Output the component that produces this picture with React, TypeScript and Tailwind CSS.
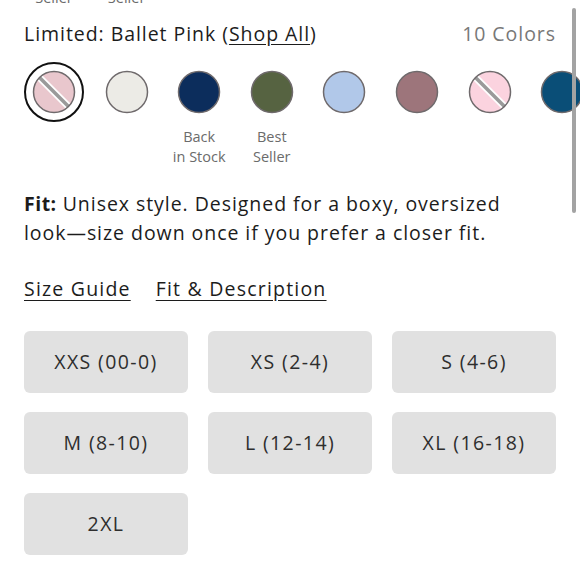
type Swatch = { color: string; stripe?: boolean; selected?: boolean; label?: string[] };

const swatches: Swatch[] = [
    { color: '#e9c7cd', stripe: true, selected: true },
    { color: '#ecebe6' },
    { color: '#0c2d5c', label: ['Back', 'in Stock'] },
    { color: '#566341', label: ['Best', 'Seller'] },
    { color: '#b1c8e9' },
    { color: '#9d757b' },
    { color: '#fbd3df', stripe: true },
    { color: '#0a4e77' },
];

const sizes = ['XXS (00-0)', 'XS (2-4)', 'S (4-6)', 'M (8-10)', 'L (12-14)', 'XL (16-18)', '2XL'];

function Dot({ color, stripe }: { color: string; stripe?: boolean }) {
    return (
        <svg width="44" height="44" viewBox="0 0 44 44">
            <defs>
                <clipPath id={`c-${color}`}>
                    <circle cx="22" cy="22" r="20.5" />
                </clipPath>
            </defs>
            <circle cx="22" cy="22" r="20.5" fill={color} />
            {stripe && (
                <g clipPath={`url(#c-${color})`}>
                    <line x1="4" y1="4" x2="40" y2="40" stroke="#ffffff" strokeWidth="7" />
                    <line x1="4" y1="4" x2="40" y2="40" stroke="#9a9a9a" strokeWidth="3.5" />
                </g>
            )}
            <circle cx="22" cy="22" r="20.5" fill="none" stroke="#6f6a6c" strokeWidth="1.5" />
        </svg>
    );
}

export default function App() {
    return (
        <div className="relative h-[580px] w-[580px] overflow-hidden bg-white font-['Open_Sans','Liberation_Sans',sans-serif] text-[#1c1c1c]">
            <div className="px-[24px]">
                <div className="mt-[-12px] flex gap-[12.6px] text-[14.5px] leading-[20px] text-[#6b6b6b]">
                    <div className="w-[60px] shrink-0 text-center">Seller</div>
                    <div className="w-[60px] shrink-0 text-center">Seller</div>
                </div>

                <div className="mt-[14px] flex items-center justify-between text-[19.5px] leading-[24px] tracking-[0.95px]">
                    <p>
                        Limited: Ballet Pink (<span className="underline underline-offset-[3px]">Shop All</span>)
                    </p>
                    <p className="text-[#787878]">10 Colors</p>
                </div>

                <div className="mt-[16px] flex gap-[12.6px]">
                    {swatches.map((s, i) => (
                        <div key={i} className="flex w-[60px] shrink-0 flex-col items-center">
                            <div
                                className={`flex h-[60px] w-[60px] items-center justify-center rounded-full ${s.selected ? 'border-2 border-[#111]' : ''}`}
                            >
                                <Dot color={s.color} stripe={s.stripe} />
                            </div>
                            {s.label && (
                                <div className="mt-[5px] whitespace-nowrap text-center text-[14.5px] leading-[20px] text-[#6b6b6b]">
                                    {s.label.map((l) => (
                                        <div key={l}>{l}</div>
                                    ))}
                                </div>
                            )}
                        </div>
                    ))}
                </div>

                <p className="mt-[22px] text-[19.5px] leading-[29px] tracking-[0.95px]">
                    <span className="font-bold tracking-[0.5px]">Fit:</span> Unisex style. Designed for a boxy, oversized{' '}
                    <span className="whitespace-nowrap">look—size</span> down once if you prefer a closer fit.
                </p>

                <div className="mt-[30px] flex gap-[25px] text-[19.5px] leading-[24px] tracking-[1.2px]">
                    <span className="underline underline-offset-[4px]">Size Guide</span>
                    <span className="underline underline-offset-[4px]">Fit &amp; Description</span>
                </div>

                <div className="mt-[30px] grid grid-cols-3 gap-x-[20px] gap-y-[19px]">
                    {sizes.map((s) => (
                        <div
                            key={s}
                            className="flex h-[62px] items-center justify-center rounded-[6px] bg-[#e1e1e1] text-[19.5px] tracking-[1.4px] text-[#2e2e2e]"
                        >
                            {s}
                        </div>
                    ))}
                </div>
            </div>

            <div className="absolute left-[572px] top-[8px] h-[205px] w-[4px] rounded-full bg-[#a3a3a3]" />
        </div>
    );
}
